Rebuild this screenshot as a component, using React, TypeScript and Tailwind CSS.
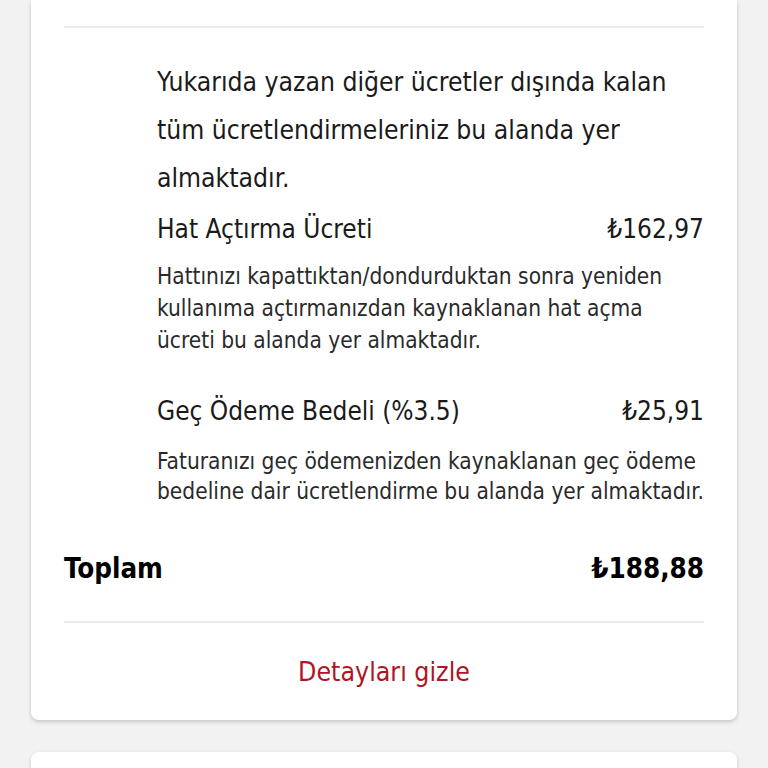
const font = "font-['DejaVu_Sans_Condensed','Liberation_Sans',sans-serif]"

function FeeRow({ title, amount, text }: { title: string; amount: string; text: string[] }) {
  return (
    <div>
      <div className="flex items-center justify-between text-[26px] leading-[32px] text-[#1a1a1a]">
        <span>{title}</span>
        <span>{amount}</span>
      </div>
      <p className="mt-[15px] text-[22.5px] leading-[32px] text-[#2a2a2a]">
        {text.map((t) => (
          <span key={t} className="block">
            {t}
          </span>
        ))}
      </p>
    </div>
  )
}

export default function App() {
  return (
    <div className={`h-screen overflow-hidden bg-[#f2f2f2] px-[31px] ${font}`}>
      <div className="rounded-b-lg bg-white px-[33px] pt-[26px] pb-[32px] shadow-[0_2px_4px_rgba(0,0,0,0.18)]">
        <div className="h-[2px] bg-[#ebebeb]" />
        <div className="pl-[93px] pt-[30px]">
          <p className="text-[26.3px] leading-[48px] text-[#1a1a1a]">
            Yukarıda yazan diğer ücretler dışında kalan
            <br />
            tüm ücretlendirmeleriniz bu alanda yer
            <br />
            almaktadır.
          </p>
          <div className="mt-[11px]">
            <FeeRow
              title="Hat Açtırma Ücreti"
              amount="₺162,97"
              text={[
                'Hattınızı kapattıktan/dondurduktan sonra yeniden',
                'kullanıma açtırmanızdan kaynaklanan hat açma',
                'ücreti bu alanda yer almaktadır.',
              ]}
            />
          </div>
          <div className="mt-[39px]">
            <div className="flex items-center justify-between text-[26px] leading-[32px] text-[#1a1a1a]">
              <span>Geç Ödeme Bedeli (%3.5)</span>
              <span>₺25,91</span>
            </div>
            <p className="mt-[19px] text-[22.5px] leading-[30px] text-[#2a2a2a]">
              Faturanızı geç ödemenizden kaynaklanan geç ödeme
              <br />
              bedeline dair ücretlendirme bu alanda yer almaktadır.
            </p>
          </div>
        </div>
        <div className="mt-[46px] flex items-center justify-between text-[27.5px] font-bold leading-[32px] text-black">
          <span>Toplam</span>
          <span>₺188,88</span>
        </div>
        <div className="mt-[37px] h-[2px] bg-[#ebebeb]" />
        <div className="mt-[33px] text-center text-[26.5px] leading-[32px] text-[#b01525]">Detayları gizle</div>
      </div>
      <div className="mt-[32px] h-[60px] rounded-t-lg bg-white shadow-[0_2px_4px_rgba(0,0,0,0.18)]" />
    </div>
  )
}
